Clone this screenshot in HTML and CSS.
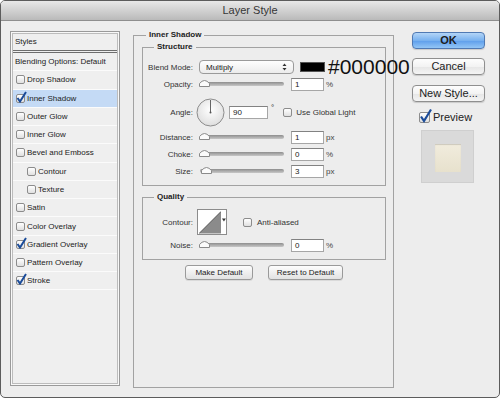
FILE: index.html
```html
<!DOCTYPE html>
<html lang="en">
<head>
    <meta charset="UTF-8">
    <meta name="viewport" content="width=device-width, initial-scale=1.0">
    <title>Layer Style</title>
    <link rel="stylesheet" href="styles.css">
</head>
<body>
<div class="window">
    <div class="titlebar">Layer Style</div>
    <div class="content">
        <!-- style list -->
        <div class="styles-panel">
            <div class="styles-list">
                <div class="styles-head">Styles</div>
                <div class="style-row plain">Blending Options: Default</div>
                <div class="style-row"><span class="check"></span>Drop Shadow</div>
                <div class="style-row selected"><span class="check"><svg width="11" height="12" viewBox="0 0 11 12"><path d="M1.5 7 L4 10.5 L10 1" fill="none" stroke="#1b4c9a" stroke-width="2"/></svg></span>Inner Shadow</div>
                <div class="style-row"><span class="check"></span>Outer Glow</div>
                <div class="style-row"><span class="check"></span>Inner Glow</div>
                <div class="style-row"><span class="check"></span>Bevel and Emboss</div>
                <div class="style-row sub"><span class="check"></span>Contour</div>
                <div class="style-row sub"><span class="check"></span>Texture</div>
                <div class="style-row"><span class="check"></span>Satin</div>
                <div class="style-row"><span class="check"></span>Color Overlay</div>
                <div class="style-row"><span class="check"><svg width="11" height="12" viewBox="0 0 11 12"><path d="M1.5 7 L4 10.5 L10 1" fill="none" stroke="#1b4c9a" stroke-width="2"/></svg></span>Gradient Overlay</div>
                <div class="style-row"><span class="check"></span>Pattern Overlay</div>
                <div class="style-row"><span class="check"><svg width="11" height="12" viewBox="0 0 11 12"><path d="M1.5 7 L4 10.5 L10 1" fill="none" stroke="#1b4c9a" stroke-width="2"/></svg></span>Stroke</div>
            </div>
        </div>

        <!-- inner shadow settings -->
        <fieldset class="group main-group">
            <legend>Inner Shadow</legend>
            <fieldset class="group sub-group">
                <legend>Structure</legend>
                <div class="field blend-field">
                    <span class="field-label">Blend Mode:</span>
                    <div class="select">Multiply<svg class="updown" width="5" height="8" viewBox="0 0 5 8"><path d="M0.5 3 L2.5 0.5 L4.5 3 Z M0.5 5 L2.5 7.5 L4.5 5 Z" fill="#333"/></svg></div>
                    <span class="swatch"></span>
                    <span class="hex">#000000</span>
                </div>
                <div class="field opacity-field">
                    <span class="field-label">Opacity:</span>
                    <div class="slider"><svg class="knob" width="11" height="8" viewBox="0 0 11 8"><path d="M0.5 7.5 L0.5 4.5 Q5.5 -1.5 10.5 4.5 L10.5 7.5 Z" fill="#fbfbfb" stroke="#8a8a8a"/></svg></div>
                    <span class="num">1</span>
                    <span class="unit">%</span>
                </div>
                <div class="field angle-field">
                    <span class="field-label">Angle:</span>
                    <svg class="dial" width="29" height="29" viewBox="0 0 29 29">
                        <defs>
                            <radialGradient id="dialfill" cx="50%" cy="40%" r="60%">
                                <stop offset="0" stop-color="#ffffff"/>
                                <stop offset="1" stop-color="#dedede"/>
                            </radialGradient>
                        </defs>
                        <circle cx="14.5" cy="14.5" r="13.5" fill="url(#dialfill)" stroke="#8c8c8c"/>
                        <line x1="14.5" y1="14.5" x2="14.5" y2="2" stroke="#666" stroke-width="1"/>
                        <circle cx="14.5" cy="14.5" r="1" fill="#555"/>
                    </svg>
                    <span class="num wide">90</span>
                    <span class="deg">°</span>
                    <span class="check"></span>
                    <span class="opt">Use Global Light</span>
                </div>
                <div class="field step">
                    <span class="field-label">Distance:</span>
                    <div class="slider"><svg class="knob" width="11" height="8" viewBox="0 0 11 8"><path d="M0.5 7.5 L0.5 4.5 Q5.5 -1.5 10.5 4.5 L10.5 7.5 Z" fill="#fbfbfb" stroke="#8a8a8a"/></svg></div>
                    <span class="num">1</span>
                    <span class="unit">px</span>
                </div>
                <div class="field step">
                    <span class="field-label">Choke:</span>
                    <div class="slider"><svg class="knob" width="11" height="8" viewBox="0 0 11 8"><path d="M0.5 7.5 L0.5 4.5 Q5.5 -1.5 10.5 4.5 L10.5 7.5 Z" fill="#fbfbfb" stroke="#8a8a8a"/></svg></div>
                    <span class="num">0</span>
                    <span class="unit">%</span>
                </div>
                <div class="field step">
                    <span class="field-label">Size:</span>
                    <div class="slider"><svg class="knob near" width="11" height="8" viewBox="0 0 11 8"><path d="M0.5 7.5 L0.5 4.5 Q5.5 -1.5 10.5 4.5 L10.5 7.5 Z" fill="#fbfbfb" stroke="#8a8a8a"/></svg></div>
                    <span class="num">3</span>
                    <span class="unit">px</span>
                </div>
            </fieldset>

            <fieldset class="group sub-group quality">
                <legend>Quality</legend>
                <div class="field contour-field">
                    <span class="field-label">Contour:</span>
                    <div class="contour">
                        <svg width="23" height="23" viewBox="0 0 23 23"><polygon points="0,23 23,0 23,23" fill="#8b8b8b"/><line x1="0" y1="23" x2="23" y2="0" stroke="#555"/></svg>
                        <svg class="drop" width="4" height="4" viewBox="0 0 4 4"><path d="M0 0.5 L4 0.5 L2 3.5 Z" fill="#333"/></svg>
                    </div>
                    <span class="check"></span>
                    <span class="opt">Anti-aliased</span>
                </div>
                <div class="field step">
                    <span class="field-label">Noise:</span>
                    <div class="slider"><svg class="knob" width="11" height="8" viewBox="0 0 11 8"><path d="M0.5 7.5 L0.5 4.5 Q5.5 -1.5 10.5 4.5 L10.5 7.5 Z" fill="#fbfbfb" stroke="#8a8a8a"/></svg></div>
                    <span class="num">0</span>
                    <span class="unit">%</span>
                </div>
            </fieldset>

            <div class="default-buttons">
                <div class="small-btn make">Make Default</div>
                <div class="small-btn reset">Reset to Default</div>
            </div>
        </fieldset>

        <!-- dialog buttons -->
        <div class="actions">
            <div class="btn primary">OK</div>
            <div class="btn">Cancel</div>
            <div class="btn third">New Style...</div>
            <div class="preview-toggle"><span class="check big"><svg width="13" height="15" viewBox="0 0 13 15"><path d="M2 8.5 L5 13 L12 1.5" fill="none" stroke="#1b4c9a" stroke-width="2.2"/></svg></span>Preview</div>
            <div class="preview-box"><div class="preview-swatch"></div></div>
        </div>
    </div>
</div>
</body>
</html>
```

FILE: styles.css
```css
*{
    margin:0;
    padding:0;
    box-sizing:border-box;
}

body{
    font-family:"Liberation Sans", Arial, sans-serif;
    font-size:8px;
    color:#222;
    background:#fff;
}

.window{
    width:500px;
    height:398px;
    border:1px solid #5c5c5c;
    border-radius:5px;
    background:#ededed;
    overflow:hidden;
}

.titlebar{
    height:20px;
    line-height:19px;
    text-align:center;
    font-size:11px;
    color:#363636;
    background:linear-gradient(#e8e8e8,#bababa);
    border-bottom:1px solid #8e8e8e;
}

.content{
    display:flex;
    align-items:flex-start;
    padding:9px 0 0 9px;
}

/* left list */
.styles-panel{
    width:110px;
    height:355px;
    margin-top:1px;
    border:1px solid #9a9a9a;
    padding:1px;
    background:#f8f8f8;
    flex-shrink:0;
}
.styles-list{
    height:100%;
    border:1px solid #bcbcbc;
    background:#efefef;
}
.styles-head{
    height:19px;
    padding-left:2px;
    line-height:16px;
    border-bottom:3px double #6d6d6d;
}
.style-row{
    display:flex;
    align-items:center;
    height:18.27px;
    padding-left:3px;
    border-bottom:1px solid #fbfbfb;
    white-space:nowrap;
}
.style-row.plain{
    padding-left:2px;
}
.style-row.sub{
    padding-left:14px;
}
.style-row.selected{
    background:#c4daf5;
}

.check{
    position:relative;
    width:9px;
    height:9px;
    margin-right:2px;
    border:1px solid #8c8c8c;
    border-radius:2px;
    background:linear-gradient(#fff,#e0e0e0);
    flex-shrink:0;
}
.check svg{
    position:absolute;
    left:-1px;
    top:-4px;
}

/* middle groups */
.group{
    border:1px solid #a2a2a2;
    min-width:0;
}
.group legend{
    font-weight:bold;
    line-height:10px;
    padding:0 3px;
}
.main-group{
    width:261px;
    height:358px;
    margin-left:13px;
    padding:0 7px 0 8px;
    flex-shrink:0;
}
.main-group > legend{
    margin-left:4px;
}
.sub-group{
    margin-top:2px;
    padding:6px 0 7px;
}
.sub-group > legend{
    margin-left:11px;
}
.sub-group.quality{
    margin-top:6px;
    padding:7px 0 7px;
}

.field{
    display:flex;
    align-items:center;
    height:14px;
    white-space:nowrap;
}
.field > *{
    flex-shrink:0;
}
.field-label{
    width:50px;
    margin-right:6px;
    text-align:right;
    color:#333;
}
.blend-field{
    height:18px;
}
.opacity-field{
    margin-top:1px;
}
.angle-field{
    height:30px;
    margin-top:6px;
}
.field.step{
    margin-top:3px;
}
.contour-field{
    height:26px;
}

.select{
    display:flex;
    align-items:center;
    justify-content:space-between;
    width:95px;
    height:14px;
    padding:0 6px 0 6px;
    border:1px solid #9a9a9a;
    border-radius:4px;
    background:linear-gradient(#fefefe,#ececec);
}
.swatch{
    width:25px;
    height:10px;
    margin-left:6px;
    background:#000;
    border:1px solid #555;
}
.hex{
    margin-left:3px;
    font-size:21px;
    line-height:20px;
    color:#111;
}

.slider{
    position:relative;
    width:84px;
    height:4px;
    margin-left:1px;
    border-radius:2px;
    background:linear-gradient(#8e8e8e,#c8c8c8);
}
.knob{
    position:absolute;
    left:-1px;
    top:-3px;
}
.knob.near{
    left:1px;
}

.num{
    width:33px;
    height:13px;
    margin-left:7px;
    padding-left:3px;
    line-height:12px;
    background:#fff;
    border:1px solid #a6a6a6;
    border-top-color:#828282;
}
.num.wide{
    width:39px;
    margin-left:4px;
}
.unit{
    margin-left:2px;
    color:#444;
}
.dial{
    margin-left:-3px;
}
.deg{
    align-self:flex-start;
    margin-top:6px;
    margin-left:3px;
}
.angle-field .check{
    margin-left:9px;
    margin-right:4px;
}
.opt{
    color:#333;
}

.contour{
    display:flex;
    align-items:flex-start;
    width:30px;
    height:26px;
    margin-left:-2px;
    padding:1px 0 0 1px;
    background:#fff;
    border:1px solid #8c8c8c;
}
.contour .drop{
    margin:7px 0 0 1px;
}
.contour-field .check{
    margin-left:16px;
    margin-right:5px;
}

.default-buttons{
    display:flex;
    justify-content:center;
    gap:15px;
    margin-top:5px;
}
.small-btn{
    height:15px;
    line-height:13px;
    text-align:center;
    border:1px solid #9a9a9a;
    border-radius:3px;
    background:linear-gradient(#fdfdfd,#e2e2e2);
    box-shadow:0 1px 0 rgba(0,0,0,.08);
    color:#222;
}
.small-btn.make{
    width:68px;
}
.small-btn.reset{
    width:75px;
}

/* right column */
.actions{
    width:73px;
    margin-left:18px;
    padding-top:2px;
    flex-shrink:0;
}
.btn{
    height:17px;
    line-height:15px;
    text-align:center;
    font-size:11px;
    color:#1c1c1c;
    border:1px solid #8f8f8f;
    border-radius:4px;
    background:linear-gradient(#fdfdfd,#f3f3f3 50%,#e6e6e6 51%,#f4f4f4);
    box-shadow:0 1px 1px rgba(0,0,0,.15);
}
.btn + .btn{
    margin-top:9px;
}
.btn.third{
    margin-top:10px;
}
.btn.primary{
    font-weight:bold;
    border-color:#4f79b3;
    background:linear-gradient(#b3d5f7,#78b1ef 50%,#5d9deb 51%,#93c6f6);
}
.preview-toggle{
    display:flex;
    align-items:center;
    height:12px;
    margin-top:9px;
    padding-left:7px;
    font-size:11px;
}
.check.big{
    width:11px;
    height:11px;
    margin-right:3px;
}
.check.big svg{
    left:-1px;
    top:-5px;
}
.preview-box{
    display:flex;
    align-items:center;
    justify-content:center;
    width:53px;
    height:53px;
    margin:7px 0 0 9px;
    background:#dadada;
    border:1px solid #cfcfcf;
}
.preview-swatch{
    width:26px;
    height:28px;
    margin-top:2px;
    background:linear-gradient(#f1ecdd,#e7e1cd);
    box-shadow:inset 0 1px 1px rgba(0,0,0,.15);
}
```
